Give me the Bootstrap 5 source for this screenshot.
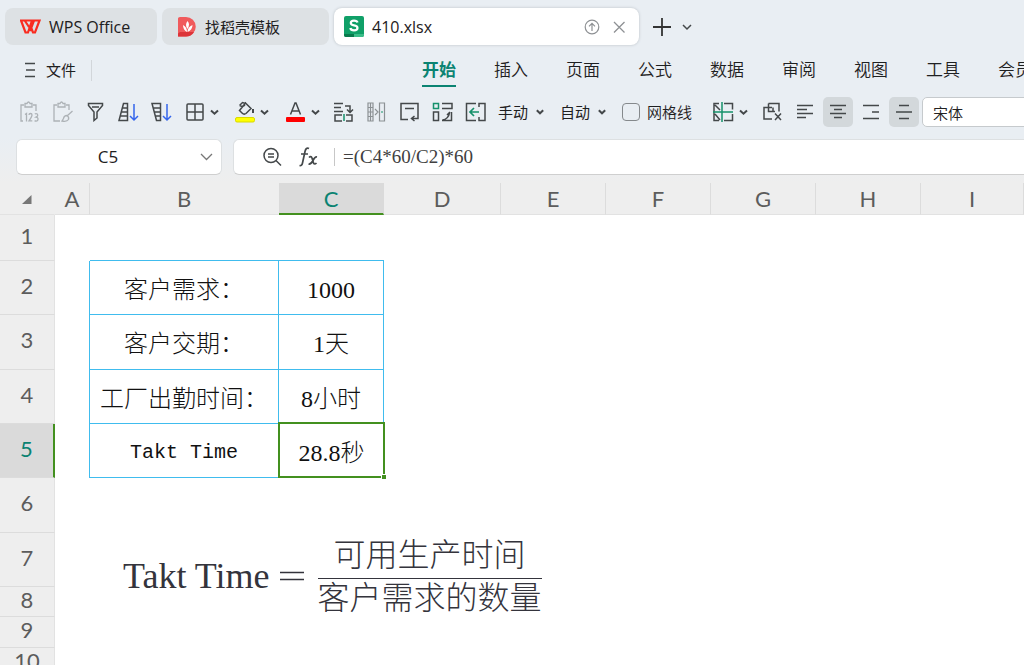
<!DOCTYPE html>
<html lang="zh-CN">
<head>
<meta charset="utf-8">
<meta name="viewport" content="width=device-width, initial-scale=1">
<title>410.xlsx - WPS Office</title>
<link href="https://cdn.jsdelivr.net/npm/bootstrap@5.3.0/dist/css/bootstrap.min.css" rel="stylesheet">
<style>
  :root { --chrome: #e9eef3; --ink: #333638; --teal: #0b8372; --sel: #43901f; --grid: #40bcee; --head: #eeeeee; --rule: #dcdcdc; }
  body { background: #fff; color: #1e2021; font: 350 15px/20px "Noto Sans", "Noto Sans CJK SC", sans-serif; }
  svg { display: block; flex: none; fill: none; stroke: #44484a; stroke-width: 1.5; }
  button { border: 0; background: none; padding: 0; color: inherit; }
  .chrome { background: linear-gradient(var(--chrome) 75%, var(--head)); }
  .titlebar { padding: 8px 5px; gap: 5px; }
  .doc-tab { height: 37px; border-radius: 8px; background: #dde1e4; padding: 0 15px; gap: 8px; white-space: nowrap; }
  .tab-home { width: 152px; }
  .tab-store { width: 167px; }
  .tab-file { width: 305px; background: #fff; padding: 0 13px 0 10px; box-shadow: 0 0 3px #b9bfc4; }
  .tab-home, .tab-file { font-family: "Open Sans", sans-serif; font-size: 16px; font-weight: 400; }
  .menu-row { height: 34px; padding-left: 24px; }
  .file-menu { gap: 10px; padding-right: 15px; border-right: 1px solid #d2d6da; height: 21px; }
  .ribbon-tabs { margin-left: 33%; gap: 38px; font-size: 17px; }
  .ribbon-tabs a { color: inherit; text-decoration: none; height: 34px; line-height: 34px; border-bottom: 2px solid transparent; display: block; }
  .ribbon-tabs a.active { color: var(--teal); font-weight: 700; border-color: var(--teal); }
  .tools { height: 30px; margin: 10px 0 12px 19px; gap: 12px; white-space: nowrap; }
  .split { width: 38px; gap: 4px; }
  .text-drop { gap: 8px; margin-right: 4px; }
  .grid-toggle { gap: 7px; padding-right: 8px; }
  .align-set { gap: 3px; }
  .align-set .sq { width: 30px; height: 30px; border-radius: 5px; }
  .align-set .on { background: #d3d8db; }
  .font-box { width: 160px; height: 30px; border: 1px solid #c6cacd; border-radius: 5px; background: #fff; padding: 0 10px; color: #222; font-weight: 350; }
  .check { width: 18px; height: 18px; appearance: none; border: 1px solid #85898c; border-radius: 4px; margin: 0; }
  .entry-row { gap: 11px; }
  .entry { height: 36px; background: #fff; border: 1px solid #dde0e2; border-bottom-color: #cfcfcf; border-radius: 6px; }
  .name-box { width: 206px; }
  .name-box input { width: 166px; font: 17px/24px "Open Sans", sans-serif; }
  .entry input { border: 0; outline: 0; background: none; color: inherit; padding: 0; }
  .formula-box { border-right: 0; border-radius: 6px 0 0 6px; }
  .formula-box input { font: 19px/24px "Liberation Serif", serif; color: #404040; height: 28px; }
  .sheet { table-layout: fixed; width: 100%; border-collapse: separate; border-spacing: 0; }
  .sheet th { background: var(--head); color: #5c5c5c; font: 22px/24px Lato, sans-serif; text-align: center; vertical-align: middle; }
  .sheet thead th { height: 32px; border-right: 1px solid var(--rule); border-bottom: 1px solid #e2e2e2; padding: 1px 0 0; }
  .sheet thead th.plain { border-right-color: var(--head); }
  .sheet tbody th { border-bottom: 1px solid var(--rule); border-right: 1px solid #e2e2e2; padding: 0 0 4px; }
  .sheet th.picked { background: #dadada; color: var(--teal); }
  .sheet thead th.picked { border-bottom: 2px solid var(--sel); border-right-color: #dadada; padding-top: 2px; }
  .sheet tbody th.picked { border-right: 2px solid var(--sel); }
  .sheet td { padding: 4px 0 0; text-align: center; vertical-align: middle; color: #111; font: 300 24px/30px "Liberation Serif", "Noto Sans CJK SC", serif; white-space: nowrap; }
  .sheet tr.slim td { padding: 0; line-height: 20px; }
  .sheet td.line-b { border-bottom: 1px solid var(--grid); }
  .sheet td.line-r { border-right: 1px solid var(--grid); }
  .sheet td.latin { font: 20px/30px "Liberation Mono", monospace; }
  .r-first { height: 46px; } .r54 { height: 54px; } .r55 { height: 55px; } .r-low { height: 30px; } .r-mid { height: 31px; }
  .chosen { position: relative; }
  .chosen::before { content: ""; position: absolute; inset: -2px -1px 0 -1px; border: 2px solid var(--sel); }
  .chosen::after { content: ""; position: absolute; right: -2px; bottom: -1px; width: 4px; height: 4px; background: var(--sel); outline: 1px solid #fff; }
  /* picture object floating over the grid */
  .equation { position: absolute; left: 123px; top: 351px; gap: 10px; color: #34343c; font: 300 32px/42px "Liberation Serif", "Noto Sans CJK SC", serif; }
  .equation .lhs { font-size: 36px; }
  .equation .over { border-bottom: 1px solid #34343c; padding-bottom: 2px; }
  .equation .under { line-height: 38px; }
</style>
</head>
<body class="vh-100 overflow-hidden">
<header class="chrome pb-2">
  <div class="titlebar d-flex align-items-center">
    <button class="doc-tab tab-home d-flex align-items-center">
      <svg width="21" height="16" viewBox="0 0 21 16" style="stroke:#f92c20;stroke-width:2.2"><path d="M1 1.5H12L8 13.5H5.5ZM5 2l4 6M10.5 7l2.5 6.5h2L19.5 1.5H14L10 12"/></svg>
      <span>WPS Office</span>
    </button>
    <button class="doc-tab tab-store d-flex align-items-center">
      <svg width="20" height="21" viewBox="0 0 20 21" style="stroke:none"><path fill="#f05a5c" d="M1 2.5Q1 1 3 1h6a9.5 9.5 0 0 1 0 19.500H1Z"/><path fill="#dc3439" d="M1 20.500V17.500L3 16H17Q14 20.500 9 20.500Z"/><path fill="#fff" d="M10.500 5q3 3 0 8q-3-4 0-8ZM6 9q4 2 4 7q-4-2-4-7ZM15.500 9q0 5-5 7q0-5 5-7Z"/></svg>
      <span>找稻壳模板</span>
    </button>
    <div class="doc-tab tab-file d-flex align-items-center">
      <svg width="20" height="21" viewBox="0 0 20 21" style="stroke:none"><rect width="20" height="21" rx="2" fill="#10a068"/><path fill="#087a4c" d="M0 18h10v3H2q-2 0-2-2Z"/><path fill="#3bbd89" d="M10 18h10v1q0 2-2 2h-8Z"/><path d="M13.500 6.500Q13 4.600 10 4.600Q6.800 4.600 6.800 7Q6.800 9 10 9.300Q13.500 9.700 13.500 12Q13.500 14.300 10 14.300Q6.800 14.300 6.300 12" style="stroke:#fff;stroke-width:2.200"/></svg>
      <span class="me-auto">410.xlsx</span>
      <button aria-label="上传"><svg width="16" height="16" viewBox="0 0 16 16" style="stroke:#8e9194;stroke-width:1.200"><circle cx="8" cy="8" r="6.800"/><path d="M8 12V4.500M5 7.300l3-3 3 3"/></svg></button>
      <button class="ms-1" aria-label="关闭"><svg width="14" height="14" viewBox="0 0 14 14" style="stroke:#8e9194;stroke-width:1.300"><path d="M2 2l10.500 10.500M12.500 2L2 12.500"/></svg></button>
    </div>
    <button class="ms-2" aria-label="新建"><svg width="20" height="20" viewBox="0 0 20 20" style="stroke:#333;stroke-width:1.800"><path d="M10 1v18M1 10h18"/></svg></button>
    <button class="ms-1" aria-label="更多标签"><svg width="12" height="12" viewBox="0 0 12 12"><path d="M2 4l4 4 4-4"/></svg></button>
  </div>

  <nav class="menu-row d-flex align-items-center overflow-hidden text-nowrap">
    <button class="file-menu d-flex align-items-center">
      <svg width="12" height="16" viewBox="0 0 12 16" style="stroke-width:1.400"><path d="M1 1.500h10M2 8h9M1 14.500h10"/></svg>文件
    </button>
    <div class="ribbon-tabs d-flex">
      <a href="#" class="active">开始</a><a href="#">插入</a><a href="#">页面</a><a href="#">公式</a><a href="#">数据</a><a href="#">审阅</a><a href="#">视图</a><a href="#">工具</a><a href="#">会员</a>
    </div>
  </nav>

  <div class="tools d-flex align-items-center overflow-hidden">
    <button aria-label="粘贴为数值" disabled><svg width="21" height="22" viewBox="0 0 21 22" style="stroke:#adb2b6;stroke-width:1.300"><path d="M4 20H2V4h3M14 4h3v6M6 2.500h2Q9.500-.5 11 2.500h2V6H6Z"/><path d="M6 13.500l1.500-1v8M10 14q0-1.500 1.500-1.500T13 14q0 1.500-3 5.900h3.300M15.800 13q1.200-.8 2.500 0 1.300 2-1.300 3.200 3 .6 1.600 3.300-1.400 1.200-3 .1"/></svg></button>
    <button aria-label="格式粘贴" disabled><svg width="21" height="22" viewBox="0 0 21 22" style="stroke:#adb2b6;stroke-width:1.300"><path d="M8 20H2V4h3M14 4h3v5M6 2.500h2Q9.500-.5 11 2.500h2V6H6Z"/><path d="M20.500 10l-5.500 5M15 14.500q-3 0-3.500 3l-1.500 2.500q5 1 6.500-1.500.8-2.500-1.500-4Z"/></svg></button>
    <button aria-label="筛选"><svg width="21" height="20" viewBox="0 0 21 20"><path d="M3.500 1.500h14v2L12 10v6l-3 2.500V10L3.500 3.500ZM7 5h7"/></svg></button>
    <button aria-label="升序"><svg width="21" height="20" viewBox="0 0 21 20"><path d="M5.500 1.500H9.500V18.500H1ZM4.500 6h5M3.500 10h6M2.500 14h7"/><path style="stroke:#3565ec" d="M16 2v16M12 14l4 4 4-4"/></svg></button>
    <button aria-label="降序"><svg width="21" height="20" viewBox="0 0 21 20"><path d="M1 1.500H9.500V18.500H5.500ZM2 6h7.500M3 10h6.500M4.500 14h5"/><path style="stroke:#3565ec" d="M16 2v16M12 14l4 4 4-4"/></svg></button>
    <button class="split d-flex align-items-center" aria-label="边框"><svg width="21" height="20" viewBox="0 0 21 20"><rect x="3" y="2" width="16" height="16" rx="1"/><path d="M11 2v16M3 10h16"/></svg><svg width="12" height="10" viewBox="0 0 12 10" style="stroke-width:2"><path d="M2 3.500l3.500 3.200L9 3.500"/></svg></button>
    <button class="split d-flex align-items-center" aria-label="填充颜色"><svg width="22" height="22" viewBox="0 0 22 22"><path d="M6.500 4.500L9.500 1.500l3 1M12.500 2l5.500 5.500-5 5Q11 14 9 12L6.500 9.500Q9 6.500 12.500 2ZM6.500 4.500q3 2 5.500-.5"/><path d="M20 8v4" style="stroke-width:2"/><rect x="2.500" y="16.500" width="19" height="4.500" rx="1.500" style="fill:#ff0;stroke:#d9d900;stroke-width:1"/></svg><svg width="12" height="10" viewBox="0 0 12 10" style="stroke-width:2"><path d="M2 3.500l3.500 3.200L9 3.500"/></svg></button>
    <button class="split d-flex align-items-center" aria-label="字体颜色"><svg width="22" height="22" viewBox="0 0 22 22"><path d="M7.500 13.500L12 2h1l4.500 11.500M9 10h7"/><rect x="3" y="16" width="19" height="5" rx="1" style="fill:#f00;stroke:none"/></svg><svg width="12" height="10" viewBox="0 0 12 10" style="stroke-width:2"><path d="M3 3.500l3.500 3.200L10 3.500"/></svg></button>
    <button aria-label="行列转换"><svg width="21" height="20" viewBox="0 0 21 20"><path d="M1 1.500h9M1 5.500h7M1 9.500h9M12 4h5v6M14 7.500l3 3 3-3M9 13H2v6h7M13 13h6v6h-6"/><path style="stroke:#16916b" d="M11 12v7"/></svg></button>
    <button aria-label="分列"><svg width="21" height="20" viewBox="0 0 21 20" style="stroke:#8c9194;stroke-width:1.200"><path d="M2 1h5v18H2ZM2 5.500h5M2 10h5M2 14.500h5M4.500 1v18M9 7l3 3-3 3M13.500 1h5v18h-5Z"/><path style="stroke:#16916b" d="M15 10h2"/></svg></button>
    <button aria-label="自动换行"><svg width="21" height="20" viewBox="0 0 21 20"><path d="M9 17.500H2V1.500h17v5M6 6.500h9M19 6v10.500h-6M15.500 14l-3 2.500 3 2.500"/></svg></button>
    <button aria-label="转置"><svg width="21" height="20" viewBox="0 0 21 20"><path d="M10 1.500h10v5H10M1.500 10v8.500h5V10ZM10 18.500h9.500V10M10.500 18q6-1 7-7M15 13l3-3"/><rect x="1.500" y="1.500" width="5" height="5" style="stroke:#16916b"/></svg></button>
    <button aria-label="合并"><svg width="21" height="20" viewBox="0 0 21 20"><path d="M11 1.500H1.500v17H11M14 5V1.500h6v17h-6V15"/><path style="stroke:#16916b;stroke-width:1.700" d="M14 10H5M9 6l-4 4 4 4"/></svg></button>
    <button class="text-drop d-flex align-items-center">手动<svg width="8" height="8" viewBox="0 0 8 8" style="stroke-width:2"><path d="M.8 2.300L4 5.300l3.200-3"/></svg></button>
    <button class="text-drop d-flex align-items-center">自动<svg width="8" height="8" viewBox="0 0 8 8" style="stroke-width:2"><path d="M.8 2.300L4 5.300l3.200-3"/></svg></button>
    <div class="grid-toggle d-flex align-items-center"><input class="check" type="checkbox" id="gridlines"><label for="gridlines">网格线</label></div>
    <button class="split d-flex align-items-center" aria-label="冻结窗格"><svg width="22" height="20" viewBox="0 0 22 20"><path d="M7 1.500H2V18.500h5M12 1.500h8.500v6M12 18.500h8.500V12M3 3l5 5M3 12l5 6"/><path style="stroke:#16916b" d="M10 0v20M1 10h20"/></svg><svg width="12" height="10" viewBox="0 0 12 10" style="stroke-width:2"><path d="M2 3.500l3.500 3.200L9 3.500"/></svg></button>
    <div class="align-set d-flex align-items-center">
      <button class="me-1" aria-label="清除对象"><svg width="21" height="20" viewBox="0 0 21 20"><path d="M6.500 1.500H17v8M6.500 1.500v8H13M10 5.500H2V17h8M11 9.500V5.500M13 11.500l6 6.500M19 11.500L13 18"/></svg></button>
      <button class="sq d-flex align-items-center justify-content-center" aria-label="左对齐"><svg width="16" height="16" viewBox="0 0 16 16"><path d="M0 1.500h16M0 5.500h10M0 9.500h16M0 13.500h9"/></svg></button>
      <button class="sq on d-flex align-items-center justify-content-center" aria-label="居中"><svg width="16" height="16" viewBox="0 0 16 16"><path d="M0 1.500h16M4 5.500h8M0 9.500h16M4 13.500h8"/></svg></button>
      <button class="sq d-flex align-items-center justify-content-center" aria-label="右对齐"><svg width="16" height="16" viewBox="0 0 16 16"><path d="M0 1.500h16M9 8h7M0 14.500h16"/></svg></button>
      <button class="sq on d-flex align-items-center justify-content-center" aria-label="垂直居中"><svg width="16" height="16" viewBox="0 0 16 16"><path d="M3 1.500h10M0 8h16M3 14.500h10"/></svg></button>
      <input class="font-box" type="text" value="宋体" aria-label="字体">
    </div>
  </div>

  <div class="entry-row d-flex ps-3">
    <div class="entry name-box d-flex align-items-center flex-shrink-0">
      <input class="text-center ps-3" type="text" value="C5" aria-label="名称框">
      <button class="ms-auto me-2" aria-label="名称列表"><svg width="13" height="10" viewBox="0 0 13 10" style="stroke:#777;stroke-width:1.300"><path d="M1 2l5.500 5.500L12 2"/></svg></button>
    </div>
    <div class="entry formula-box d-flex align-items-center flex-grow-1 ps-4">
      <button class="ms-1 me-3" aria-label="浏览公式"><svg width="20" height="20" viewBox="0 0 20 20"><circle cx="9" cy="8.500" r="7"/><path d="M6 7h6M6 10h6M14 13.500l5 5"/></svg></button>
      <button class="me-3" aria-label="插入函数"><svg width="20" height="22" viewBox="0 0 20 22"><path d="M11 2.500Q8 1 7 5.500L4.500 17Q4 20 1.500 19.500M3 8h7M11 11.500q2-2 3 .5l1.500 5q1 2 3 0M19 11q-2-.5-4 3.500t-4.500 3.500" style="stroke-width:1.700"/></svg></button>
      <div class="vr my-2"></div>
      <input class="flex-grow-1 ms-2" type="text" value="=(C4*60/C2)*60" aria-label="编辑栏">
    </div>
  </div>
</header>

<main class="position-relative overflow-hidden">
  <table class="sheet">
    <colgroup>
      <col style="width:55px"><col style="width:35px"><col style="width:189px"><col style="width:105px"><col style="width:117px">
      <col style="width:105px"><col style="width:105px"><col style="width:105px"><col style="width:105px"><col>
    </colgroup>
    <thead>
      <tr><th class="plain" aria-label="全选"><svg class="mx-auto" width="10" height="9" viewBox="0 0 10 9" style="stroke:none"><path fill="#777" d="M9.500 0V9H0Z"/></svg></th><th scope="col">A</th><th scope="col" class="plain">B</th><th scope="col" class="picked">C</th><th scope="col">D</th><th scope="col">E</th><th scope="col">F</th><th scope="col">G</th><th scope="col">H</th><th scope="col">I</th></tr>
    </thead>
    <tbody>
      <tr class="r-first"><th scope="row">1</th><td></td><td class="line-b"></td><td class="line-b"></td><td colspan="6"></td></tr>
      <tr class="r54"><th scope="row">2</th><td class="line-r"></td><td class="line-b line-r">客户需求：</td><td class="line-b line-r">1000</td><td colspan="6"></td></tr>
      <tr class="r55"><th scope="row">3</th><td class="line-r"></td><td class="line-b line-r">客户交期：</td><td class="line-b line-r">1天</td><td colspan="6"></td></tr>
      <tr class="r54"><th scope="row">4</th><td class="line-r"></td><td class="line-b line-r">工厂出勤时间：</td><td class="line-b line-r">8小时</td><td colspan="6"></td></tr>
      <tr class="r54"><th scope="row" class="picked">5</th><td class="line-r"></td><td class="line-b line-r latin">Takt Time</td><td class="chosen">28.8秒</td><td colspan="6"></td></tr>
      <tr class="r55"><th scope="row">6</th><td colspan="9"></td></tr>
      <tr class="r54"><th scope="row">7</th><td colspan="9"></td></tr>
      <tr class="r-low slim"><th scope="row">8</th><td colspan="9"></td></tr>
      <tr class="r-mid slim"><th scope="row">9</th><td colspan="9"></td></tr>
      <tr class="r-low slim"><th scope="row">10</th><td colspan="9"></td></tr>
    </tbody>
  </table>
  <div class="equation d-flex align-items-center text-nowrap">
    <span class="lhs">Takt Time</span>
    <svg width="24" height="10" viewBox="0 0 24 10" style="stroke:#34343c;stroke-width:1.400" role="img" aria-label="等于"><path d="M0 1.500h24M0 8.500h24"/></svg>
    <div class="text-center ms-1">
      <div class="over">可用生产时间</div>
      <div class="under">客户需求的数量</div>
    </div>
  </div>
</main>
<script src="https://cdn.jsdelivr.net/npm/bootstrap@5.3.0/dist/js/bootstrap.bundle.min.js"></script>
</body>
</html>
